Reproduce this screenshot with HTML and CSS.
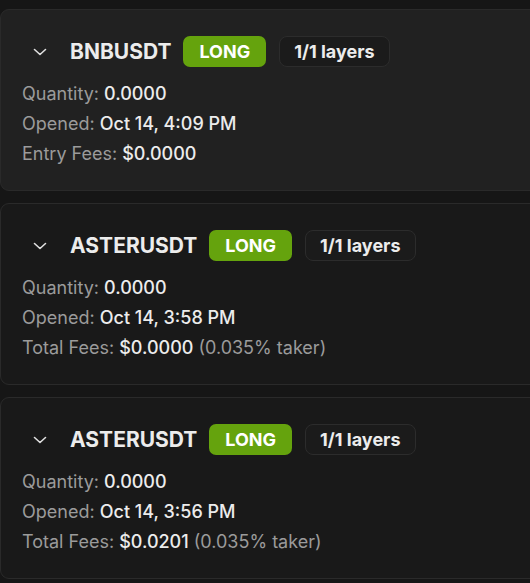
FILE: index.html
```html
<!DOCTYPE html>
<html>
<head>
<meta charset="utf-8">
<link rel="stylesheet" href="styles.css">
</head>
<body>
<div class="list">
  <div class="card card-hover">
    <div class="head">
      <button class="toggle"><svg width="14" height="8" viewBox="0 0 14 8"><path d="M1.5 1.5 L7 6.5 L12.5 1.5" fill="none" stroke="#e0e0e0" stroke-width="1.6" stroke-linecap="round" stroke-linejoin="round"/></svg></button>
      <span class="sym">BNBUSDT</span>
      <span class="side">LONG</span>
      <span class="layers">1/1 layers</span>
    </div>
    <div class="rows">
      <div class="row"><span class="lbl">Quantity:</span> <span class="val">0.0000</span></div>
      <div class="row"><span class="lbl">Opened:</span> <span class="val">Oct 14, 4:09 PM</span></div>
      <div class="row"><span class="lbl">Entry Fees:</span> <span class="val">$0.0000</span></div>
    </div>
  </div>
  <div class="card">
    <div class="head">
      <button class="toggle"><svg width="14" height="8" viewBox="0 0 14 8"><path d="M1.5 1.5 L7 6.5 L12.5 1.5" fill="none" stroke="#e0e0e0" stroke-width="1.6" stroke-linecap="round" stroke-linejoin="round"/></svg></button>
      <span class="sym">ASTERUSDT</span>
      <span class="side">LONG</span>
      <span class="layers">1/1 layers</span>
    </div>
    <div class="rows">
      <div class="row"><span class="lbl">Quantity:</span> <span class="val">0.0000</span></div>
      <div class="row"><span class="lbl">Opened:</span> <span class="val">Oct 14, 3:58 PM</span></div>
      <div class="row"><span class="lbl">Total Fees:</span> <span class="val">$0.0000</span> <span class="lbl">(0.035% taker)</span></div>
    </div>
  </div>
  <div class="card">
    <div class="head">
      <button class="toggle"><svg width="14" height="8" viewBox="0 0 14 8"><path d="M1.5 1.5 L7 6.5 L12.5 1.5" fill="none" stroke="#e0e0e0" stroke-width="1.6" stroke-linecap="round" stroke-linejoin="round"/></svg></button>
      <span class="sym">ASTERUSDT</span>
      <span class="side">LONG</span>
      <span class="layers">1/1 layers</span>
    </div>
    <div class="rows">
      <div class="row"><span class="lbl">Quantity:</span> <span class="val">0.0000</span></div>
      <div class="row"><span class="lbl">Opened:</span> <span class="val">Oct 14, 3:56 PM</span></div>
      <div class="row"><span class="lbl">Total Fees:</span> <span class="val">$0.0201</span> <span class="lbl">(0.035% taker)</span></div>
    </div>
  </div>
</div>
</body>
</html>
```
FILE: styles.css
```css
html, body {
  margin: 0;
  padding: 0;
  background: #161616;
  font-family: Inter, "Noto Sans", sans-serif;
  overflow: hidden;
}
.list {
  padding-top: 9px;
  display: flex;
  flex-direction: column;
  gap: 12px;
  width: 560px;
}
.card {
  box-sizing: border-box;
  height: 182px;
  border: 1px solid #2a2a2a;
  border-radius: 9px;
  background: #191919;
  padding: 26px 21px 0 21px;
}
.card-hover {
  background: #212121;
}
.head {
  display: flex;
  align-items: center;
  height: 31px;
}
.toggle {
  width: 36px;
  height: 31px;
  padding: 0;
  margin: 0 12px 0 0;
  border: none;
  background: transparent;
  display: flex;
  align-items: center;
  justify-content: center;
}
.sym {
  font-size: 21px;
  font-weight: 700;
  color: #ececec;
  margin-right: 12px;
}
.side {
  box-sizing: border-box;
  height: 31px;
  padding: 0 16px;
  display: flex;
  align-items: center;
  background: #65a30d;
  color: #fff;
  font-size: 18px;
  font-weight: 700;
  border-radius: 7px;
  margin-right: 13px;
}
.layers {
  box-sizing: border-box;
  height: 31px;
  padding: 0 14px;
  display: flex;
  align-items: center;
  border: 1px solid #2c2c2c;
  border-radius: 8px;
  background: #1b1b1b;
  color: #ececec;
  font-size: 18px;
  font-weight: 700;
}
.rows {
  margin-top: 12px;
  display: flex;
  flex-direction: column;
}
.row {
  font-size: 18px;
  line-height: 30px;
  white-space: nowrap;
}
.lbl {
  color: #9b9b9b;
}
.val {
  color: #ececec;
  font-weight: 500;
}
```
